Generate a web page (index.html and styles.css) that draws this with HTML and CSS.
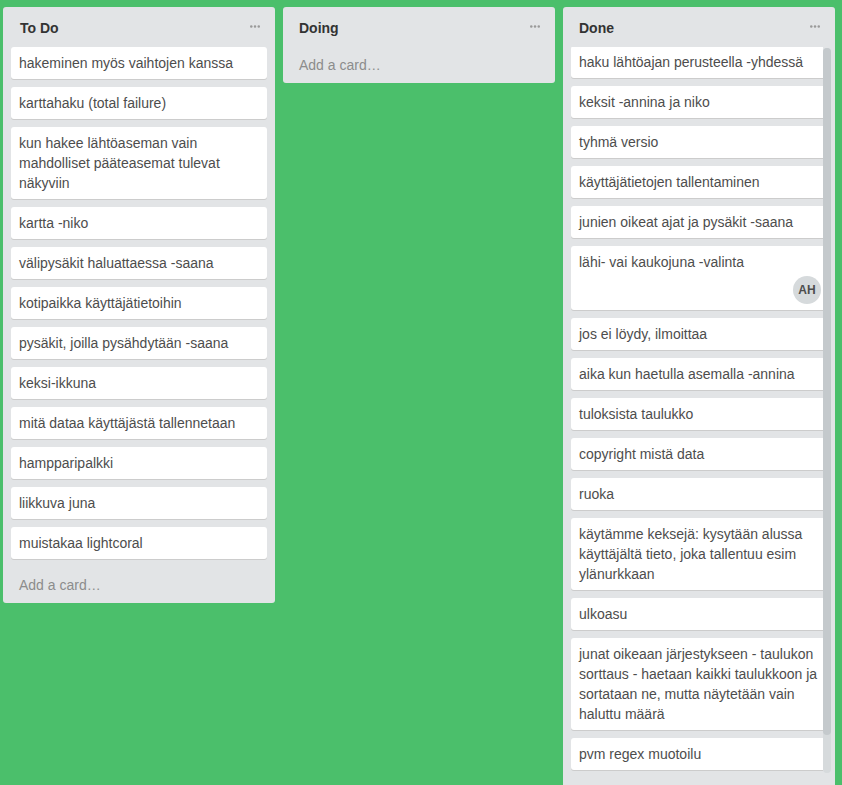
FILE: index.html
```html
<!DOCTYPE html>
<html lang="fi">
<head>
<meta charset="utf-8">
<title>Board</title>
<link rel="stylesheet" href="styles.css">
</head>
<body>
<main class="board">
  <section class="list">
    <header class="list-header"><h2>To Do</h2><svg class="menu" viewBox="0 0 10 3"><circle cx="1.25" cy="1.5" r="1.25"/><circle cx="5" cy="1.5" r="1.25"/><circle cx="8.75" cy="1.5" r="1.25"/></svg></header>
    <div class="cards">
      <article class="card">hakeminen myös vaihtojen kanssa</article>
      <article class="card">karttahaku (total failure)</article>
      <article class="card">kun hakee lähtöaseman vain mahdolliset pääteasemat tulevat näkyviin</article>
      <article class="card">kartta -niko</article>
      <article class="card">välipysäkit haluattaessa -saana</article>
      <article class="card">kotipaikka käyttäjätietoihin</article>
      <article class="card">pysäkit, joilla pysähdytään -saana</article>
      <article class="card">keksi-ikkuna</article>
      <article class="card">mitä dataa käyttäjästä tallennetaan</article>
      <article class="card">hampparipalkki</article>
      <article class="card">liikkuva juna</article>
      <article class="card">muistakaa lightcoral</article>
    </div>
    <a class="add">Add a card…</a>
  </section>
  <section class="list doing">
    <header class="list-header"><h2>Doing</h2><svg class="menu" viewBox="0 0 10 3"><circle cx="1.25" cy="1.5" r="1.25"/><circle cx="5" cy="1.5" r="1.25"/><circle cx="8.75" cy="1.5" r="1.25"/></svg></header>
    <a class="add">Add a card…</a>
  </section>
  <section class="list done">
    <header class="list-header"><h2>Done</h2><svg class="menu" viewBox="0 0 10 3"><circle cx="1.25" cy="1.5" r="1.25"/><circle cx="5" cy="1.5" r="1.25"/><circle cx="8.75" cy="1.5" r="1.25"/></svg></header>
    <div class="scroll-area">
      <div class="cards">
        <article class="card">haku lähtöajan perusteella -yhdessä</article>
        <article class="card">keksit -annina ja niko</article>
        <article class="card">tyhmä versio</article>
        <article class="card">käyttäjätietojen tallentaminen</article>
        <article class="card">junien oikeat ajat ja pysäkit -saana</article>
        <article class="card with-member">lähi- vai kaukojuna -valinta<span class="member">AH</span></article>
        <article class="card">jos ei löydy, ilmoittaa</article>
        <article class="card">aika kun haetulla asemalla -annina</article>
        <article class="card">tuloksista taulukko</article>
        <article class="card">copyright mistä data</article>
        <article class="card">ruoka</article>
        <article class="card">käytämme keksejä: kysytään alussa käyttäjältä tieto, joka tallentuu esim ylänurkkaan</article>
        <article class="card">ulkoasu</article>
        <article class="card">junat oikeaan järjestykseen - taulukon sorttaus - haetaan kaikki taulukkoon ja sortataan ne, mutta näytetään vain haluttu määrä</article>
        <article class="card">pvm regex muotoilu</article>
      </div>
      <div class="track"><div class="thumb"></div></div>
    </div>
  </section>
</main>
</body>
</html>
```
FILE: styles.css
```css
* { box-sizing: border-box; }
body {
  margin: 0;
  background: #4bbf6b;
  color: #4d4d4d;
  font: 14px/20px "Liberation Sans", Arial, sans-serif;
}
.board {
  display: flex;
  align-items: flex-start;
  gap: 8px;
  height: 785px;
  padding: 7px 0 0 3px;
  overflow: hidden;
}
.list {
  flex: none;
  width: 272px;
  padding: 0 8px;
  border-radius: 3px;
  background: #e2e4e6;
}
.list-header {
  display: flex;
  justify-content: space-between;
  height: 40px;
  padding: 11px 7px 0 9px;
}
.doing .list-header, .done .list-header { padding-left: 8px; }
.done .list-header { padding-right: 11px; }
h2 {
  margin: 0;
  color: #333;
  font-size: 14px;
  line-height: 20px;
}
.menu {
  width: 10px;
  height: 3px;
  margin-top: 7px;
  fill: #999;
}
.cards {
  display: flex;
  flex-direction: column;
  gap: 8px;
}
.card {
  padding: 6px 8px;
  border-radius: 3px;
  background: #fff;
  box-shadow: 0 1px 0 #ccc;
}
.add {
  display: block;
  padding: 16px 8px 8px;
  color: #8c8c8c;
}
.doing .add { padding-top: 8px; }
.done {
  height: 790px;
  padding-right: 4px;
}
.scroll-area {
  display: flex;
  align-items: flex-start;
  width: 260px;
  overflow: hidden;
}
.done .cards { width: 252px; margin: -1px 0 2px; }
.done .card { border-radius: 3px 0 0 3px; padding-right: 0; }
.with-member {
  display: flex;
  flex-direction: column;
  height: 64px;
}
.member {
  align-self: flex-end;
  flex: none;
  width: 28px;
  height: 28px;
  margin: 4px 2px 0 0;
  border-radius: 50%;
  background: #d6dadc;
  font-size: 12px;
  font-weight: 700;
  line-height: 28px;
  text-align: center;
}
.track {
  width: 8px;
  height: 725px;
  margin-top: 1px;
  border-radius: 4px;
  background: #d6dadc;
}
.thumb {
  height: 687px;
  border-radius: 4px;
  background: #c4c9cc;
}
```
